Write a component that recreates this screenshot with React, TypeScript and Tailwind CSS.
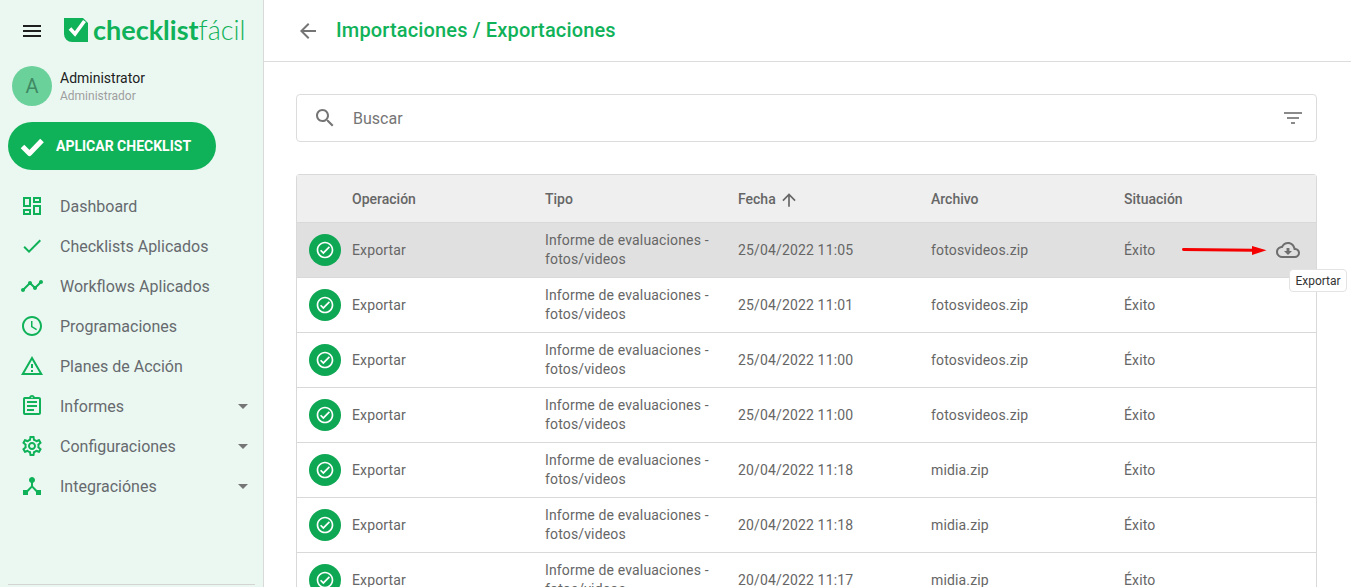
import React from 'react';

const Icon = ({ d, className }: { d: string; className?: string }) => (
  <svg viewBox="0 0 24 24" fill="currentColor" className={className}>
    <path d={d} />
  </svg>
);

const paths = {
  menu: 'M3 18h18v-2H3v2zm0-5h18v-2H3v2zm0-7v2h18V6H3z',
  dashboard: 'M19 5v2h-4V5h4M9 5v6H5V5h4m10 8v6h-4v-6h4M9 17v2H5v-2h4M21 3h-8v6h8V3zM11 3H3v10h8V3zm10 8h-8v10h8V11zm-10 4H3v6h8v-6z',
  check: 'M9 16.17L4.83 12l-1.42 1.41L9 19 21 7l-1.41-1.41z',
  timeline: 'M23 8c0 1.1-.9 2-2 2-.18 0-.35-.02-.51-.07l-3.56 3.55c.05.16.07.34.07.52 0 1.1-.9 2-2 2s-2-.9-2-2c0-.18.02-.36.07-.52l-2.55-2.55c-.16.05-.34.07-.52.07s-.36-.02-.52-.07l-4.55 4.56c.05.16.07.33.07.51 0 1.1-.9 2-2 2s-2-.9-2-2 .9-2 2-2c.18 0 .35.02.51.07l4.56-4.55C8.02 9.36 8 9.18 8 9c0-1.1.9-2 2-2s2 .9 2 2c0 .18-.02.36-.07.52l2.55 2.55c.16-.05.34-.07.52-.07s.36.02.52.07l3.55-3.56C19.02 8.35 19 8.18 19 8c0-1.1.9-2 2-2s2 .9 2 2z',
  schedule: 'M11.99 2C6.47 2 2 6.48 2 12s4.47 10 9.99 10C17.52 22 22 17.52 22 12S17.52 2 11.99 2zM12 20c-4.42 0-8-3.58-8-8s3.58-8 8-8 8 3.58 8 8-3.58 8-8 8zm.5-13H11v6l5.25 3.15.75-1.23-4.5-2.67z',
  warning: 'M12 5.99L19.53 19H4.47L12 5.99M12 2L1 21h22L12 2zm1 14h-2v2h2v-2zm0-6h-2v4h2v-4z',
  assignment: 'M7 15h7v2H7zm0-4h10v2H7zm0-4h10v2H7zm12-4h-4.18C14.4 1.84 13.3 1 12 1c-1.3 0-2.4.84-2.82 2H5c-.14 0-.27.01-.4.04-.39.08-.74.28-1.01.55-.18.18-.33.4-.43.64-.1.23-.16.49-.16.77v14c0 .27.06.54.16.78s.25.45.43.64c.27.27.62.47 1.01.55.13.02.26.03.4.03h14c1.1 0 2-.9 2-2V5c0-1.1-.9-2-2-2zm-7-.25c.41 0 .75.34.75.75s-.34.75-.75.75-.75-.34-.75-.75.34-.75.75-.75zM19 19H5V5h14v14z',
  settings: 'M19.43 12.98c.04-.32.07-.64.07-.98 0-.34-.03-.66-.07-.98l2.11-1.65c.19-.15.24-.42.12-.64l-2-3.46c-.09-.16-.26-.25-.44-.25-.06 0-.12.01-.17.03l-2.49 1c-.52-.4-1.08-.73-1.69-.98l-.38-2.65C14.46 2.18 14.25 2 14 2h-4c-.25 0-.46.18-.49.42l-.38 2.65c-.61.25-1.17.59-1.69.98l-2.49-1c-.06-.02-.12-.03-.18-.03-.17 0-.34.09-.43.25l-2 3.46c-.13.22-.07.49.12.64l2.11 1.65c-.04.32-.07.65-.07.98 0 .33.03.66.07.98l-2.11 1.65c-.19.15-.24.42-.12.64l2 3.46c.09.16.26.25.44.25.06 0 .12-.01.17-.03l2.49-1c.52.4 1.08.73 1.69.98l.38 2.65c.03.24.24.42.49.42h4c.25 0 .46-.18.49-.42l.38-2.65c.61-.25 1.17-.59 1.69-.98l2.49 1c.06.02.12.03.18.03.17 0 .34-.09.43-.25l2-3.46c.12-.22.07-.49-.12-.64l-2.11-1.65zm-1.98-1.71c.04.31.05.52.05.73 0 .21-.02.43-.05.73l-.14 1.13.89.7 1.08.84-.7 1.21-1.27-.51-1.04-.42-.9.68c-.43.32-.84.56-1.25.73l-1.06.43-.16 1.13-.2 1.35h-1.4l-.19-1.35-.16-1.13-1.06-.43c-.43-.18-.83-.41-1.23-.71l-.91-.7-1.06.43-1.27.51-.7-1.21 1.08-.84.89-.7-.14-1.13c-.03-.31-.05-.54-.05-.74s.02-.43.05-.73l.14-1.13-.89-.7-1.08-.84.7-1.21 1.27.51 1.04.42.9-.68c.43-.32.84-.56 1.25-.73l1.06-.43.16-1.13.2-1.35h1.39l.19 1.35.16 1.13 1.06.43c.43.18.83.41 1.23.71l.91.7 1.06-.43 1.27-.51.7 1.21-1.07.85-.89.7.14 1.13zM12 8c-2.21 0-4 1.79-4 4s1.79 4 4 4 4-1.79 4-4-1.79-4-4-4zm0 6c-1.1 0-2-.9-2-2s.9-2 2-2 2 .9 2 2-.9 2-2 2z',
  hub: 'M17 16l-4-4V8.82C14.16 8.4 15 7.3 15 6c0-1.66-1.34-3-3-3S9 4.34 9 6c0 1.3.84 2.4 2 2.82V12l-4 4H3v5h5v-3.05l4-4.2 4 4.2V21h5v-5h-4z',
  dropDown: 'M7 10l5 5 5-5z',
  back: 'M20 11H7.83l5.59-5.59L12 4l-8 8 8 8 1.41-1.41L7.83 13H20v-2z',
  search: 'M15.5 14h-.79l-.28-.27C15.41 12.59 16 11.11 16 9.5 16 5.91 13.09 3 9.5 3S3 5.91 3 9.5 5.91 16 9.5 16c1.61 0 3.09-.59 4.23-1.57l.27.28v.79l5 4.99L20.49 19l-4.99-5zm-6 0C7.01 14 5 11.99 5 9.5S7.01 5 9.5 5 14 7.01 14 9.5 11.99 14 9.5 14z',
  filter: 'M10 18h4v-2h-4v2zM3 6v2h18V6H3zm3 7h12v-2H6v2z',
  up: 'M4 12l1.41 1.41L11 7.83V20h2V7.83l5.58 5.59L20 12l-8-8-8 8z',
  okCircle: 'M12 2C6.48 2 2 6.48 2 12s4.48 10 10 10 10-4.48 10-10S17.52 2 12 2zm0 18c-4.41 0-8-3.59-8-8s3.59-8 8-8 8 3.59 8 8-3.59 8-8 8zm4.59-12.42L10 14.17l-2.59-2.58L6 13l4 4 8-8z',
  cloud: 'M19.35 10.04C18.67 6.59 15.64 4 12 4 9.11 4 6.6 5.64 5.35 8.04 2.34 8.36 0 10.91 0 14c0 3.31 2.69 6 6 6h13c2.76 0 5-2.24 5-5 0-2.64-2.05-4.78-4.65-4.96zM19 18H6c-2.21 0-4-1.79-4-4 0-2.05 1.53-3.76 3.56-3.97l1.07-.11.5-.95C8.08 7.14 9.94 6 12 6c2.62 0 4.88 1.86 5.39 4.43l.3 1.5 1.53.11c1.56.1 2.78 1.41 2.78 2.96 0 1.65-1.35 3-3 3zm-5.55-8h-2.9v3H8l4 4 4-4h-2.55z',
};

const menu = [
  { label: 'Dashboard', icon: paths.dashboard },
  { label: 'Checklists Aplicados', icon: paths.check },
  { label: 'Workflows Aplicados', icon: paths.timeline },
  { label: 'Programaciones', icon: paths.schedule },
  { label: 'Planes de Acción', icon: paths.warning },
  { label: 'Informes', icon: paths.assignment, more: true },
  { label: 'Configuraciones', icon: paths.settings, more: true },
  { label: 'Integraciónes', icon: paths.hub, more: true },
];

const rows = [
  ['25/04/2022 11:05', 'fotosvideos.zip'],
  ['25/04/2022 11:01', 'fotosvideos.zip'],
  ['25/04/2022 11:00', 'fotosvideos.zip'],
  ['25/04/2022 11:00', 'fotosvideos.zip'],
  ['20/04/2022 11:18', 'midia.zip'],
  ['20/04/2022 11:18', 'midia.zip'],
  ['20/04/2022 11:17', 'midia.zip'],
];

const cols = 'grid grid-cols-[55px_193px_193px_193px_193px_1fr] items-center';

const Sidebar = () => (
  <aside className="w-[264px] shrink-0 h-full bg-[#ebf8f2] border-r border-[#d9d9d9] relative flex flex-col">
    <div className="flex items-center h-[61px] pl-[20px]">
      <Icon d={paths.menu} className="w-6 h-6 text-[#1f1f1f]" />
      <svg viewBox="0 0 24 24" className="w-[24px] h-[24px] ml-[20px] mb-[1px]">
        <path d="M0 0H19L24 5V24H8A8 8 0 0 1 0 16Z" fill="#10b259" />
        <path d="M6 10.5L11 16L20.5 3" fill="none" stroke="#ffffff" strokeWidth="3.6" />
      </svg>
      <span className="ml-[5px] text-[27px] leading-none text-[#10b259] font-['Lato',sans-serif] font-bold mb-[2px]">
        checklist<span className="font-light">fácil</span>
      </span>
    </div>
    <div className="flex items-center pl-[12px] mt-[5px] h-[40px]">
      <div className="w-10 h-10 rounded-full bg-[#6bd19b] flex items-center justify-center text-[20px] text-[#3f8a63]">A</div>
      <div className="ml-[8px]">
        <div className="text-[14px] leading-[18px] text-[#212121]">Administrator</div>
        <div className="mt-[1px] text-[12px] leading-[16px] text-[#9e9e9e]">Administrador</div>
      </div>
    </div>
    <div className="ml-[8px] mt-[16px] w-[208px] h-[48px] rounded-full bg-[#10b259] flex items-center pl-[12px] text-white">
      <svg viewBox="0 0 24 24" className="w-[24px] h-[24px]">
        <path d="M2.5 12.5l7 7L22 6.5" fill="none" stroke="currentColor" strokeWidth="5" strokeLinejoin="round" />
      </svg>
      <span className="ml-[12px] text-[14px] font-bold">APLICAR CHECKLIST</span>
    </div>
    <nav className="mt-[16px]">
      {menu.map(m => (
        <div key={m.label} className="flex items-center h-[40px] pl-[20px] pr-[12px]">
          <Icon d={m.icon} className="w-6 h-6 text-[#10b259]" />
          <span className="ml-[16px] pt-[2px] text-[16px] text-[#666a6e] flex-1">{m.label}</span>
          {m.more && <Icon d={paths.dropDown} className="w-6 h-6 text-[#757575] mr-[-4px]" />}
        </div>
      ))}
    </nav>
    <div className="absolute left-[8px] right-[8px] bottom-[2px] h-px bg-[#d4d4d4]" />
  </aside>
);

const Row = ({ date, file, active }: { date: string; file: string; active: boolean }) => (
  <div className={`${cols} h-[55px] border-b border-[#d9d9d9] text-[14px] tracking-[0.15px] text-[#666666] ${active ? 'bg-[#e0e0e0]' : 'bg-white'}`}>
    <div className="pl-[12px]">
      <div className="w-8 h-8 rounded-full bg-[#0ea855] flex items-center justify-center">
        <Icon d={paths.okCircle} className="w-5 h-5 text-white" />
      </div>
    </div>
    <div>Exportar</div>
    <div className="leading-[19px] whitespace-nowrap">Informe de evaluaciones -<br />fotos/videos</div>
    <div>{date}</div>
    <div>{file}</div>
    <div className="flex items-center justify-between pr-[16px]">
      <span>Éxito</span>
      {active && <Icon d={paths.cloud} className="w-6 h-6 text-[#6e6e6e]" />}
    </div>
  </div>
);

export default function App() {
  return (
    <div className="w-full h-screen overflow-hidden flex bg-white font-['Roboto',sans-serif] relative">
      <Sidebar />
      <main className="flex-1 min-w-0 h-full overflow-hidden">
        <header className="h-[62px] border-b border-[#dcdcdc] flex items-center pl-[32px]">
          <Icon d={paths.back} className="w-6 h-6 text-[#757575]" />
          <h1 className="ml-[16px] pb-[2px] text-[20px] font-medium tracking-[0.15px] text-[#10b259]">Importaciones / Exportaciones</h1>
        </header>
        <div className="pl-[32px] pr-[34px] pt-[32px]">
          <div className="h-[48px] border border-[#dcdcdc] rounded flex items-center pl-[16px] pr-[11px] text-[#757575]">
            <Icon d={paths.search} className="w-6 h-6" />
            <span className="ml-[16px] pt-[2px] text-[16px] flex-1">Buscar</span>
            <Icon d={paths.filter} className="w-6 h-6 text-[#8a8a8a]" />
          </div>
          <div className="mt-[32px] border border-b-0 border-[#d9d9d9] rounded-t">
            <div className={`${cols} h-[48px] pt-[2px] bg-[#efefef] border-b border-[#d9d9d9] text-[14px] font-medium text-[#666666]`}>
              <div />
              <div>Operación</div>
              <div>Tipo</div>
              <div className="flex items-center">Fecha<Icon d={paths.up} className="w-5 h-5 ml-[3px] text-[#666666]" /></div>
              <div>Archivo</div>
              <div>Situación</div>
            </div>
            {rows.map((r, i) => (
              <Row key={i} date={r[0]} file={r[1]} active={i === 0} />
            ))}
          </div>
        </div>
      </main>
      {/* red annotation arrow over the first row */}
      <svg viewBox="0 0 85 11" className="absolute left-[1182px] top-[245px] w-[85px] h-[11px] text-[#f50000]">
        <path d="M1.5 4.4L71 5.2" stroke="currentColor" strokeWidth="3" strokeLinecap="round" fill="none" />
        <path d="M70 1L84.5 5.2 70 10z" fill="currentColor" />
      </svg>
      <div className="absolute left-[1289px] top-[269px] w-[58px] h-[23px] rounded bg-white border border-[#e3e3e3] flex items-center justify-center text-[12px] text-[#333333]">
        Exportar
      </div>
    </div>
  );
}
